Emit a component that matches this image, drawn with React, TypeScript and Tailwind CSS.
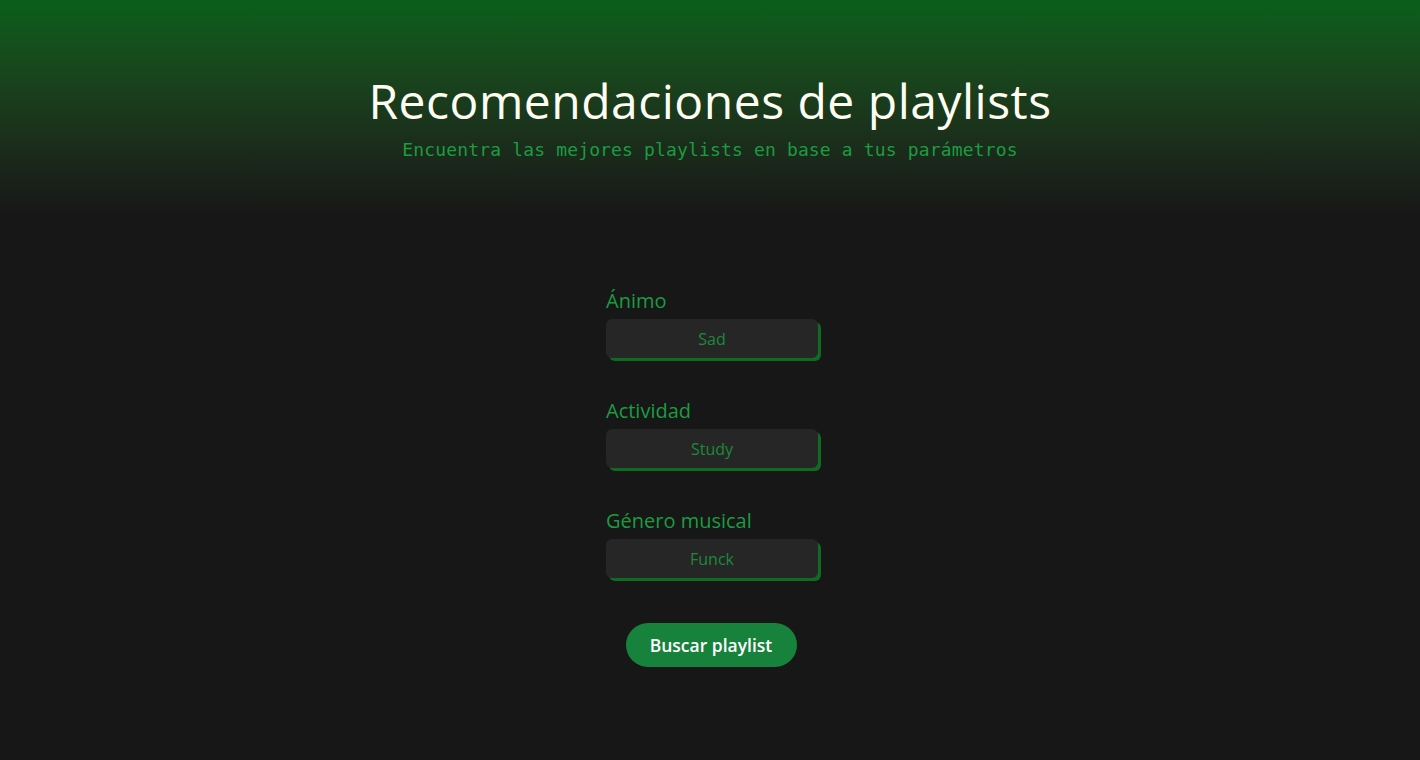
import React from "react";

const fields = [
  { label: "Ánimo", value: "Sad" },
  { label: "Actividad", value: "Study" },
  { label: "Género musical", value: "Funck" },
];

export default function App() {
  return (
    <div className="min-h-screen w-full bg-[#171717] font-['Open_Sans',sans-serif]">
      <header className="flex h-[215px] flex-col items-center bg-gradient-to-b from-[#085f1a] to-[#171717] pt-[72px]">
        <h1 className="text-[48px] leading-[58px] tracking-[0.5px] text-[#fffdf2]">
          Recomendaciones de playlists
        </h1>
        <p className="mt-[8px] font-['DejaVu_Sans_Mono',monospace] text-[18px] leading-6 tracking-[0.15px] text-[#1b9c40]">
          Encuentra las mejores playlists en base a tus parámetros
        </p>
      </header>

      <main className="flex flex-col items-center pt-[74px]">
        <div className="ml-[4px] flex w-[212px] flex-col gap-[41px]">
          {fields.map((f) => (
            <div key={f.label} className="flex flex-col gap-[6px]">
              <label className="text-[20px] leading-6 text-[#1b9c40]">{f.label}</label>
              <button className="h-[39px] w-[212px] rounded-md bg-[#262626] text-[16px] text-[#1c8a3a] shadow-[3px_3px_0_#0f6b22]">
                {f.value}
              </button>
            </div>
          ))}
        </div>
        <button className="ml-[2px] mt-[45px] h-[44px] w-[171px] rounded-full bg-[#17823c] text-[17.5px] font-semibold text-white">
          Buscar playlist
        </button>
      </main>
    </div>
  );
}
